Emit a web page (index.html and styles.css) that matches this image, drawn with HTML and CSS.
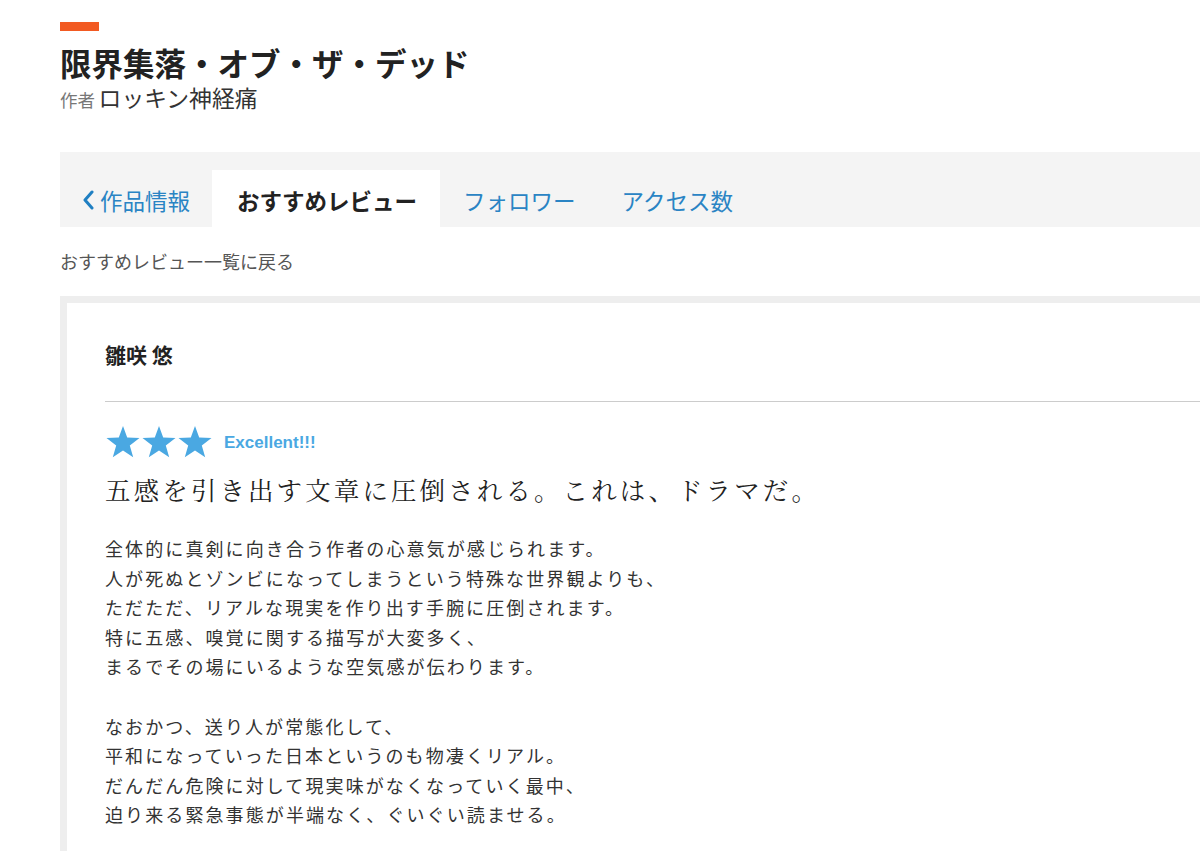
FILE: index.html
```html
<!DOCTYPE html>
<html lang="ja">
<head>
<meta charset="utf-8">
<title>限界集落・オブ・ザ・デッド</title>
<link rel="stylesheet" href="styles.css">
</head>
<body>
<div class="page">
  <header class="work-header">
    <div class="accent"></div>
    <h1 class="work-title">限界集落・オブ・ザ・デッド</h1>
    <p class="author"><span class="author-label">作者</span> <span class="author-name">ロッキン神経痛</span></p>
  </header>

  <nav class="tabs">
    <a class="tab tab-back" href="#"><svg class="chevron" width="12" height="20" viewBox="0 0 12 20"><polyline points="10,2 3,10 10,18" fill="none" stroke="currentColor" stroke-width="3" stroke-linecap="round" stroke-linejoin="round"/></svg>作品情報</a>
    <a class="tab tab-active" href="#">おすすめレビュー</a>
    <a class="tab" href="#">フォロワー</a>
    <a class="tab" href="#">アクセス数</a>
  </nav>

  <a class="back-link" href="#">おすすめレビュー一覧に戻る</a>

  <article class="review-card">
    <h2 class="reviewer">雛咲 悠</h2>
    <hr class="divider">
    <div class="rating">
      <span class="stars">
        <svg width="36" height="34" viewBox="0 0 36 34"><polygon points="18,1 22.2,12.6 34.5,12.9 24.8,20.5 28.2,32.3 18,25.4 7.8,32.3 11.2,20.5 1.5,12.9 13.8,12.6" fill="currentColor"/></svg><svg width="36" height="34" viewBox="0 0 36 34"><polygon points="18,1 22.2,12.6 34.5,12.9 24.8,20.5 28.2,32.3 18,25.4 7.8,32.3 11.2,20.5 1.5,12.9 13.8,12.6" fill="currentColor"/></svg><svg width="36" height="34" viewBox="0 0 36 34"><polygon points="18,1 22.2,12.6 34.5,12.9 24.8,20.5 28.2,32.3 18,25.4 7.8,32.3 11.2,20.5 1.5,12.9 13.8,12.6" fill="currentColor"/></svg>
      </span>
      <span class="rating-label">Excellent!!!</span>
    </div>
    <h3 class="review-title">五感を引き出す文章に圧倒される。これは、ドラマだ。</h3>
    <div class="review-body">
      <p>全体的に真剣に向き合う作者の心意気が感じられます。<br>人が死ぬとゾンビになってしまうという特殊な世界観よりも、<br>ただただ、リアルな現実を作り出す手腕に圧倒されます。<br>特に五感、嗅覚に関する描写が大変多く、<br>まるでその場にいるような空気感が伝わります。</p>
      <p>なおかつ、送り人が常態化して、<br>平和になっていった日本というのも物凄くリアル。<br>だんだん危険に対して現実味がなくなっていく最中、<br>迫り来る緊急事態が半端なく、ぐいぐい読ませる。</p>
    </div>
  </article>
</div>
</body>
</html>
```

FILE: styles.css
```css
html, body {
  margin: 0;
  padding: 0;
  background: #ffffff;
  overflow: hidden;
}

body {
  font-family: "Noto Sans CJK JP", "Noto Sans", sans-serif;
  color: #333333;
}

.page {
  width: 1240px;
  padding: 22px 0 0 60px;
}

.work-header {
  display: flex;
  flex-direction: column;
  align-items: flex-start;
}

.accent {
  width: 39px;
  height: 9px;
  background: #f25a22;
  margin-bottom: 12px;
}

.work-title {
  margin: 0;
  font-size: 31.5px;
  line-height: 38px;
  font-weight: 700;
  color: #222222;
}

.author {
  margin: 2px 0 0;
  line-height: 30px;
}

.author-label {
  font-size: 17.5px;
  color: #777777;
}

.author-name {
  font-size: 22.8px;
  color: #333333;
}

.tabs {
  margin-top: 37px;
  height: 75px;
  background: #f4f4f4;
  display: flex;
  align-items: flex-end;
}

.tab {
  display: flex;
  align-items: center;
  height: 57px;
  padding: 2px 23px 0;
  box-sizing: border-box;
  font-size: 22.5px;
  color: #2a84c4;
  text-decoration: none;
}

.tab-back {
  padding-left: 22px;
  padding-right: 22px;
}

.chevron {
  margin-right: 6px;
  color: #1f7fc2;
}

.tab-active {
  background: #ffffff;
  color: #222222;
  font-weight: 700;
  padding-left: 25px;
  padding-right: 23px;
}

.back-link {
  display: block;
  margin-top: 21px;
  font-size: 18px;
  line-height: 26px;
  color: #555555;
  text-decoration: none;
}

.review-card {
  margin-top: 22px;
  border: 7px solid #eeeeee;
  border-right: none;
  border-bottom: none;
  padding: 37px 0 40px 38px;
}

.reviewer {
  margin: 0;
  font-size: 21px;
  line-height: 28px;
  font-weight: 700;
  color: #222222;
}

.divider {
  margin: 33px 0 0;
  border: none;
  border-top: 1.5px solid #cccccc;
}

.rating {
  margin-top: 23px;
  display: flex;
  align-items: center;
  height: 34px;
}

.stars {
  display: flex;
  color: #4aa8e2;
}

.rating-label {
  margin-left: 11px;
  margin-top: 2px;
  font-family: "Liberation Sans", Arial, sans-serif;
  font-weight: 700;
  font-size: 17px;
  color: #4aa8e2;
}

.review-title {
  margin: 12px 0 0;
  font-family: "Noto Serif CJK JP", "Liberation Serif", serif;
  font-size: 25.5px;
  line-height: 36px;
  font-weight: 400;
  letter-spacing: 3.1px;
  color: #222222;
}

.review-body {
  margin-top: 27px;
  font-size: 18px;
  line-height: 29.6px;
  letter-spacing: 2.1px;
  color: #333333;
}

.review-body p {
  margin: 0 0 29.6px;
}
```
